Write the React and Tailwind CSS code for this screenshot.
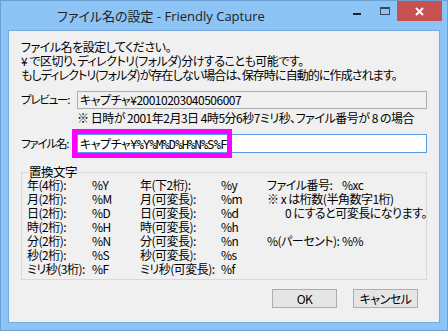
import React from 'react'

const jp = "font-['Noto_Sans_CJK_JP',sans-serif] [font-feature-settings:'palt']"
const mono = "font-['DejaVu_Sans_Mono','Noto_Sans_CJK_JP',monospace] text-[12px] tracking-[-0.8px]"

const rows = [
  ['年(4桁):', '%Y', '年(下2桁):', '%y', 'ファイル番号:', '%xc'],
  ['月(2桁):', '%M', '月(可変長):', '%m', '※ x は桁数(半角数字1桁)', ''],
  ['日(2桁):', '%D', '日(可変長):', '%d', '', ''],
  ['時(2桁):', '%H', '時(可変長):', '%h', '', ''],
  ['分(2桁):', '%N', '分(可変長):', '%n', '%(パーセント):', '%%'],
  ['秒(2桁):', '%S', '秒(可変長):', '%s', '', ''],
  ['ミリ秒(3桁):', '%F', 'ミリ秒(可変長):', '%f', '', ''],
]

export default function App() {
  return (
    <div className={`w-[448px] h-[331px] overflow-hidden flex flex-col bg-[#8cc4f5] border border-[#6e9fd3] text-black text-[12px] tracking-[-0.5px] whitespace-nowrap ${jp}`}>
      {/* title bar */}
      <div className="h-[29px] flex items-start relative">
        <div className="pl-[56px] pt-[5px] text-[13px] tracking-normal leading-[20px] text-[#222] font-['Open_Sans','Noto_Sans_CJK_JP',sans-serif]">
          ファイル名の設定 - Friendly Capture
        </div>
        <div className="ml-auto flex items-start">
          <div className="w-[8px] h-[2px] bg-[#222] mt-[12px] mr-[19px]" />
          <div className="w-[10px] h-[8px] border border-t-2 border-[#3a4a5a] mt-[6px] mr-[7px]" />
          <div className="w-[45px] h-[20px] bg-[#c75050] flex items-center justify-center mr-[5px]">
            <svg width="9" height="9" viewBox="0 0 9 9">
              <path d="M1 1 L8 8 M8 1 L1 8" stroke="#fff" strokeWidth="2" />
            </svg>
          </div>
        </div>
      </div>

      {/* client area */}
      <div className="mx-[7px] mb-[7px] flex-1 bg-[#f0f0f0] border border-[#78a8dc] pt-[9px] px-[12px] flex flex-col">
        <div className="leading-[14px]">
          <div>ファイル名を設定してください。</div>
          <div>¥ で区切り、ディレクトリ(フォルダ)分けすることも可能です。</div>
          <div className="tracking-[-0.9px]">もしディレクトリ(フォルダ)が存在しない場合は、保存時に自動的に作成されます。</div>
        </div>

        <div className="mt-[9px] flex items-center">
          <div className="w-[56px] shrink-0 text-[11.5px] tracking-[-1.2px]">プレビュー:</div>
          <div className="flex-1 h-[18px] border border-[#adadad] bg-[#f0f0f0] pl-[2px] leading-[16px]">
            キャプチャ¥20010203040506007
          </div>
        </div>
        <div className="mt-[2px] ml-[56px] leading-[14px]">
          ※ 日時が 2001年2月3日 4時5分6秒7ミリ秒、ファイル番号が 8 の場合
        </div>

        <div className="mt-[9px] flex items-center">
          <div className="w-[56px] shrink-0 text-[11.5px] tracking-[-1.2px]">ファイル名:</div>
          <div className="flex-1 h-[19px] border border-[#5b9de3] bg-white pl-[2px] leading-[17px] relative">
            キャプチャ<span className={mono}>¥%Y%M%D%H%N%S%F</span>
            <div className="absolute left-[-6px] top-[-6px] w-[160px] h-[29px] border-[5px] border-[#ff00ff]" />
          </div>
        </div>

        <div className="mt-[19px] h-[108px] shrink-0 border border-[#d8d8d8] relative pt-[5px] pl-[5px] leading-[14px]">
          <div className="absolute left-[6px] top-[-8px] bg-[#f0f0f0] px-[1px] leading-[14px] text-[12.5px]">置換文字</div>
          {rows.map((r, i) => (
            <div key={i} className="flex h-[14px]">
              <div className="w-[65px] shrink-0">{r[0]}</div>
              <div className="w-[48px] shrink-0">{r[1]}</div>
              <div className="w-[81px] shrink-0">{r[2]}</div>
              <div className="w-[46px] shrink-0">{r[3]}</div>
              {i === 2 ? (
                <div className="pl-[18px]">0 にすると可変長になります。</div>
              ) : (
                <>
                  <div className="w-[75px] shrink-0">{r[4]}</div>
                  <div>{r[5]}</div>
                </>
              )}
            </div>
          ))}
        </div>

        <div className="mt-[9px] flex justify-end gap-[16px] mr-[9px]">
          <button className="w-[65px] h-[19px] border border-[#adadad] bg-[#e5e5e5] leading-[17px] text-center">OK</button>
          <button className="w-[65px] h-[19px] border border-[#adadad] bg-[#e5e5e5] leading-[17px] text-center">キャンセル</button>
        </div>
      </div>
    </div>
  )
}
